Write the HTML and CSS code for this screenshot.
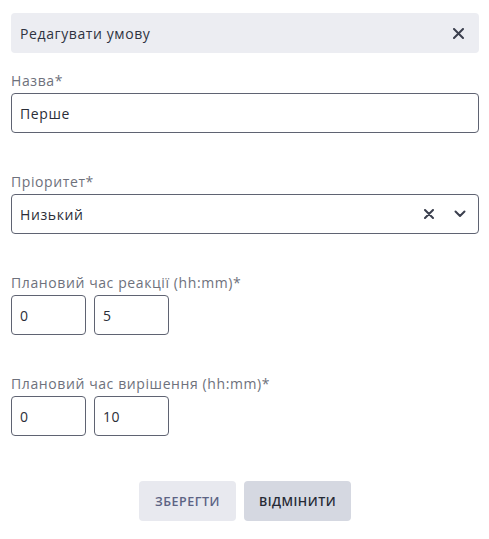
FILE: index.html
```html
<!DOCTYPE html>
<html lang="uk">
<head>
<meta charset="utf-8">
<link rel="stylesheet" href="styles.css">
</head>
<body>
<div class="dialog">
  <div class="header">
    <span class="title">Редагувати умову</span>
    <svg class="close" width="11" height="11" viewBox="0 0 11 11"><path d="M1 1L10 10M10 1L1 10" stroke="#3b3f4e" stroke-width="2" stroke-linecap="round"/></svg>
  </div>

  <div class="field">
    <div class="label">Назва*</div>
    <div class="input wide">Перше</div>
  </div>

  <div class="field">
    <div class="label">Пріоритет*</div>
    <div class="input wide select">
      <span class="value">Низький</span>
      <svg class="clear" width="10" height="10" viewBox="0 0 10 10"><path d="M1 1L9 9M9 1L1 9" stroke="#3b3f4e" stroke-width="2" stroke-linecap="round"/></svg>
      <svg class="chev" width="12" height="8" viewBox="0 0 12 8"><path d="M1.5 1.5L6 6L10.5 1.5" fill="none" stroke="#3b3f4e" stroke-width="2" stroke-linecap="round" stroke-linejoin="round"/></svg>
    </div>
  </div>

  <div class="field">
    <div class="label">Плановий час реакції (hh:mm)*</div>
    <div class="pair">
      <div class="input small">0</div>
      <div class="input small">5</div>
    </div>
  </div>

  <div class="field">
    <div class="label">Плановий час вирішення (hh:mm)*</div>
    <div class="pair">
      <div class="input small">0</div>
      <div class="input small">10</div>
    </div>
  </div>

  <div class="actions">
    <button class="btn save">ЗБЕРЕГТИ</button>
    <button class="btn cancel">ВІДМІНИТИ</button>
  </div>
</div>
</body>
</html>
```

FILE: styles.css
```css
* { box-sizing: border-box; }
body {
  margin: 0;
  background: #ffffff;
  font-family: "Open Sans", "DejaVu Sans", sans-serif;
  color: #2b2e38;
  letter-spacing: 0.6px;
}
.dialog {
  padding: 13px 10px 0 11px;
  display: flex;
  flex-direction: column;
}
.header {
  height: 40px;
  background: #ecedf2;
  border-radius: 4px;
  display: flex;
  align-items: center;
  justify-content: space-between;
  padding: 0 15px 0 9px;
}
.title {
  font-size: 14px;
  color: #2f3341;
}
.field {
  margin-top: 19px;
  display: flex;
  flex-direction: column;
}
.field + .field { margin-top: 40px; }
.label {
  font-size: 14px;
  line-height: 18px;
  color: #6e717c;
  margin-bottom: 3px;
}
.input {
  height: 40px;
  border: 1px solid #5f6372;
  border-radius: 4px;
  padding: 0 8px;
  display: flex;
  align-items: center;
  font-size: 14px;
  color: #2b2e38;
}
.wide { width: 100%; }
.select .value { flex: 1; }
.clear { margin-right: 20px; }
.chev { margin-right: 4px; }
.pair {
  display: flex;
  gap: 8px;
}
.small { width: 75px; }
.actions {
  margin-top: 45px;
  display: flex;
  justify-content: center;
  gap: 8px;
}
.btn {
  height: 40px;
  border: none;
  border-radius: 4px;
  font-family: "Open Sans", "DejaVu Sans", sans-serif;
  font-size: 12.5px;
  font-weight: 600;
  letter-spacing: 0.5px;
  padding: 0;
}
.save {
  background: #e8e9ef;
  color: #5c6384;
  width: 97px;
}
.cancel {
  background: #d5d8e1;
  color: #262a35;
  width: 107px;
}
```
